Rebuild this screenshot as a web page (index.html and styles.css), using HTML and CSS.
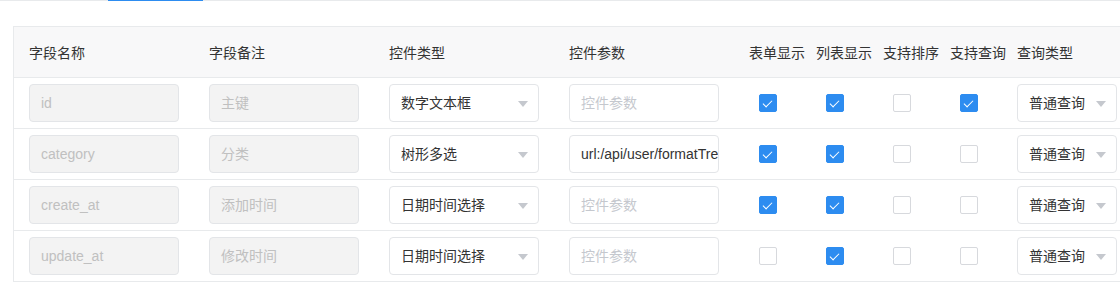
FILE: index.html
```html
<!DOCTYPE html>
<html lang="zh-CN">
<head>
<meta charset="utf-8">
<link rel="stylesheet" href="styles.css">
</head>
<body>
<div class="tabbar"><div class="tab-active"></div></div>
<div class="table">
  <div class="row head">
    <div class="cell">字段名称</div>
    <div class="cell">字段备注</div>
    <div class="cell">控件类型</div>
    <div class="cell">控件参数</div>
    <div class="cell">表单显示</div>
    <div class="cell">列表显示</div>
    <div class="cell">支持排序</div>
    <div class="cell">支持查询</div>
    <div class="cell">查询类型</div>
  </div>

  <div class="row">
    <div class="cell"><div class="input disabled">id</div></div>
    <div class="cell"><div class="input disabled">主键</div></div>
    <div class="cell"><div class="select">数字文本框<span class="arrow"></span></div></div>
    <div class="cell"><div class="input placeholder">控件参数</div></div>
    <div class="cell"><span class="cb on"></span></div>
    <div class="cell"><span class="cb on"></span></div>
    <div class="cell"><span class="cb"></span></div>
    <div class="cell"><span class="cb on"></span></div>
    <div class="cell"><div class="select small">普通查询<span class="arrow"></span></div></div>
  </div>

  <div class="row">
    <div class="cell"><div class="input disabled">category</div></div>
    <div class="cell"><div class="input disabled">分类</div></div>
    <div class="cell"><div class="select">树形多选<span class="arrow"></span></div></div>
    <div class="cell"><div class="input value">url:/api/user/formatTree</div></div>
    <div class="cell"><span class="cb on"></span></div>
    <div class="cell"><span class="cb on"></span></div>
    <div class="cell"><span class="cb"></span></div>
    <div class="cell"><span class="cb"></span></div>
    <div class="cell"><div class="select small">普通查询<span class="arrow"></span></div></div>
  </div>

  <div class="row">
    <div class="cell"><div class="input disabled">create_at</div></div>
    <div class="cell"><div class="input disabled">添加时间</div></div>
    <div class="cell"><div class="select">日期时间选择<span class="arrow"></span></div></div>
    <div class="cell"><div class="input placeholder">控件参数</div></div>
    <div class="cell"><span class="cb on"></span></div>
    <div class="cell"><span class="cb on"></span></div>
    <div class="cell"><span class="cb"></span></div>
    <div class="cell"><span class="cb"></span></div>
    <div class="cell"><div class="select small">普通查询<span class="arrow"></span></div></div>
  </div>

  <div class="row">
    <div class="cell"><div class="input disabled">update_at</div></div>
    <div class="cell"><div class="input disabled">修改时间</div></div>
    <div class="cell"><div class="select">日期时间选择<span class="arrow"></span></div></div>
    <div class="cell"><div class="input placeholder">控件参数</div></div>
    <div class="cell"><span class="cb"></span></div>
    <div class="cell"><span class="cb on"></span></div>
    <div class="cell"><span class="cb"></span></div>
    <div class="cell"><span class="cb"></span></div>
    <div class="cell"><div class="select small">普通查询<span class="arrow"></span></div></div>
  </div>
</div>
</body>
</html>
```

FILE: styles.css
```css
html, body {
  margin: 0;
  padding: 0;
  background: #fff;
  overflow: hidden;
}
body {
  font-family: "Liberation Sans", "Noto Sans CJK SC", sans-serif;
  font-size: 14px;
  color: #333;
  width: 1120px;
  height: 307px;
}
.tabbar {
  height: 1px;
  background: #e8eaec;
  display: flex;
}
.tab-active {
  margin-left: 108px;
  width: 95px;
  height: 1px;
  background: #2d8cf0;
}
.table {
  margin: 25px 0 0 13px;
  width: 1200px;
  border-left: 1px solid #e8eaec;
  border-top: 1px solid #e8eaec;
}
.row {
  display: grid;
  grid-template-columns: 180px 180px 180px 180px 67px 67px 67px 67px 140px;
  height: 50px;
  border-bottom: 1px solid #e8eaec;
  align-items: center;
}
.row.head {
  background: #f8f8f9;
  color: #333;
}
.cell {
  padding-left: 15px;
  white-space: nowrap;
  display: flex;
  align-items: center;
  min-width: 0;
}
.input, .select {
  box-sizing: border-box;
  width: 150px;
  height: 38px;
  border: 1px solid #e3e5e8;
  border-radius: 4px;
  padding-left: 11px;
  display: flex;
  align-items: center;
  overflow: hidden;
  white-space: nowrap;
  font-size: 14px;
  line-height: 20px;
}
.input.disabled {
  background: #f3f3f3;
  color: #c0c0c0;
}
.input.placeholder {
  background: #fff;
  color: #c5c8ce;
}
.input.value {
  background: #fff;
  color: #333;
  padding-right: 0;
}
.select {
  position: relative;
  background: #fff;
  color: #333;
}
.select.small {
  width: 100px;
}
.arrow {
  position: absolute;
  right: 10px;
  top: 16px;
  width: 0;
  height: 0;
  border-left: 5.5px solid transparent;
  border-right: 5.5px solid transparent;
  border-top: 6px solid #c5c8ce;
}
.cb {
  box-sizing: border-box;
  display: block;
  margin-left: 10px;
  width: 18px;
  height: 18px;
  border: 1px solid #d7d9dd;
  border-radius: 2px;
  background: #fff;
  position: relative;
}
.cb.on {
  background: #2d8cf0;
  border-color: #2d8cf0;
}
.cb.on::after {
  content: "";
  position: absolute;
  left: 5px;
  top: 3px;
  width: 4px;
  height: 8px;
  border-right: 1.5px solid #fff;
  border-bottom: 1.5px solid #fff;
  transform: rotate(45deg);
}
```
